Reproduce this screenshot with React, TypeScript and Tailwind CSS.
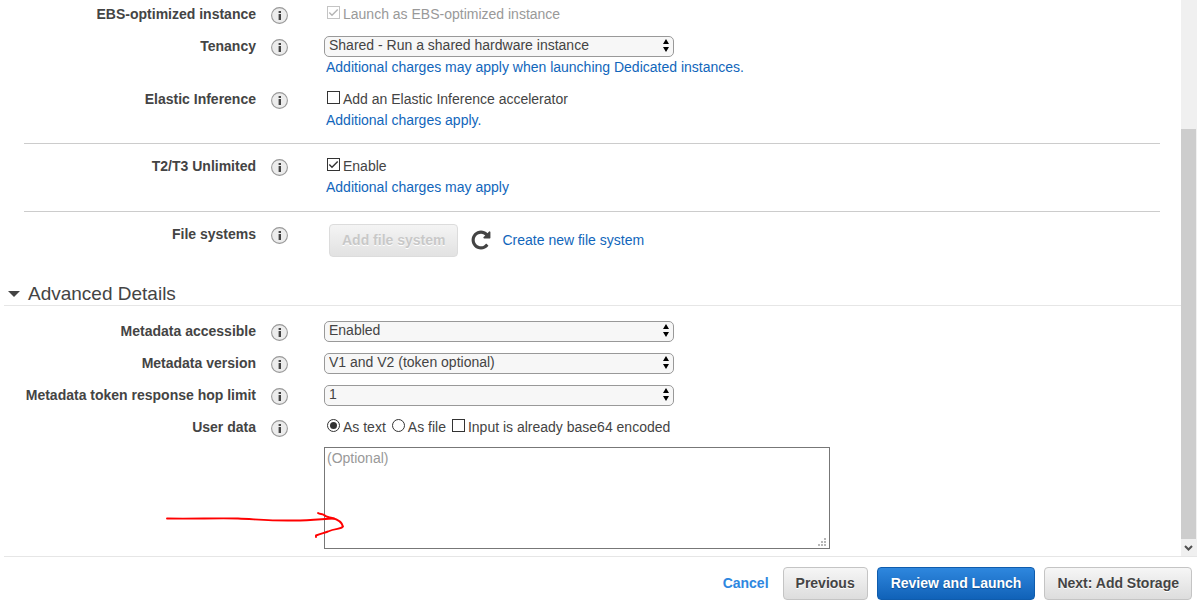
import type { ReactNode } from "react";

function InfoIcon({ topic }: { topic: string }) {
  return (
    <button type="button" aria-label={`About ${topic}`} className="mt-[3px] h-[17px] w-[17px] shrink-0">
      <svg viewBox="0 0 17 17" className="block h-[17px] w-[17px]">
        <circle cx="8.5" cy="8.5" r="7.9" fill="#ececec" stroke="#999" strokeWidth="1.1" />
        <path d="M8 4h2v2H8z M8 7h2v6H8z" fill="#444" />
        <path d="M7 4h1v2H7z M7 7h1v6H7z" fill="#aaa" />
      </svg>
    </button>
  );
}

function Row({ label, htmlFor, children }: { label: string; htmlFor?: string; children: ReactNode }) {
  return (
    <div className="flex items-start">
      <label htmlFor={htmlFor} className="w-64 shrink-0 text-right font-bold">
        {label}
      </label>
      <div className="flex w-[68px] shrink-0 pl-[15px]">
        <InfoIcon topic={label} />
      </div>
      <div className="min-w-0 flex-1">{children}</div>
    </div>
  );
}

function Select({ id, value }: { id: string; value: string }) {
  return (
    <div className="relative w-full max-w-[350px]">
      <select
        id={id}
        defaultValue={value}
        className="block h-[21px] w-full appearance-none rounded-[5px] border border-[#999] bg-[#f7f7f7] pr-5 pb-0.5 pl-1 leading-[17px] text-[#444]"
      >
        <option>{value}</option>
      </select>
      <svg viewBox="0 0 6 13" className="pointer-events-none absolute top-[3px] right-[5px] h-[13px] w-[6px]">
        <path d="M3 0L6 5H0z M0 8H6L3 13z" fill="#000" />
      </svg>
    </div>
  );
}

function Check({ label, checked = false, disabled = false }: { label: string; checked?: boolean; disabled?: boolean }) {
  return (
    <label className={disabled ? "inline-flex text-[#999]" : "inline-flex"}>
      <span className="relative mt-0.5 mr-[3px] h-[13px] w-[13px]">
        <input
          type="checkbox"
          defaultChecked={checked}
          disabled={disabled}
          className="peer block h-[13px] w-[13px] appearance-none border border-[#333] bg-white disabled:border-[#c4c4c4]"
        />
        <svg
          viewBox="0 0 13 13"
          className="pointer-events-none absolute inset-0 hidden h-[13px] w-[13px] text-[#333] peer-checked:block peer-disabled:text-[#b4b4b4]"
        >
          <path d="M2.300 6.500L5 9.200L10.700 3.500" fill="none" stroke="currentColor" strokeWidth="1.400" />
        </svg>
      </span>
      {label}
    </label>
  );
}

function Radio({ label, checked = false }: { label: string; checked?: boolean }) {
  return (
    <label className="inline-flex">
      <span className="relative mt-0.5 mr-[3px] h-[13px] w-[13px]">
        <input
          type="radio"
          name="user-data-mode"
          defaultChecked={checked}
          className="peer block h-[13px] w-[13px] appearance-none rounded-full border border-[#333] bg-white"
        />
        <span className="pointer-events-none absolute inset-[3px] hidden rounded-full bg-[#333] peer-checked:block" />
      </span>
      {label}
    </label>
  );
}

function TextLink({ children }: { children: ReactNode }) {
  return (
    <a href="#" className="text-[#1166bb] hover:underline">
      {children}
    </a>
  );
}

const button = "h-[33px] rounded-[4px] border font-bold";
const grayButton = "border-[#c4c4c4] bg-linear-to-b from-[#f6f6f6] to-[#dddddd] text-[#444] [text-shadow:0_1px_0_#fff]";

export default function App() {
  return (
    <div className="flex min-h-screen flex-col bg-white font-['Liberation_Sans',Arial,sans-serif] text-[14px] leading-[21px] text-[#444]">
      <main className="mr-px ml-1 flex border-b border-[#e6e6e6]">
        <div className="-ml-1 min-w-0 flex-1 pt-1 pb-[7px]">
          <div className="flex flex-col gap-[11px]">
            <Row label="EBS-optimized instance">
              <div className="pl-[3px]">
                <Check label="Launch as EBS-optimized instance" checked disabled />
              </div>
            </Row>
            <Row label="Tenancy" htmlFor="tenancy">
              <Select id="tenancy" value="Shared - Run a shared hardware instance" />
              <div className="pl-0.5">
                <TextLink>Additional charges may apply when launching Dedicated instances.</TextLink>
              </div>
            </Row>
            <Row label="Elastic Inference">
              <div className="pl-[3px]">
                <Check label="Add an Elastic Inference accelerator" />
              </div>
              <div className="pl-0.5">
                <TextLink>Additional charges apply.</TextLink>
              </div>
            </Row>
          </div>
          <hr className="mt-3 mr-[21px] mb-3 ml-6 border-[#ccc]" />
          <Row label="T2/T3 Unlimited">
            <div className="pl-[3px]">
              <Check label="Enable" checked />
            </div>
            <div className="pl-0.5">
              <TextLink>Additional charges may apply</TextLink>
            </div>
          </Row>
          <hr className="mt-[13px] mr-[21px] mb-3 ml-6 border-[#ccc]" />
          <Row label="File systems">
            <div className="flex items-center pl-[5px]">
              <button
                type="button"
                disabled
                className={`${button} border-[#dcdcdc] bg-linear-to-b from-[#f4f4f4] to-[#e2e2e2] px-3 text-[#c8c8c8] [text-shadow:0_1px_0_#fff]`}
              >
                Add file system
              </button>
              <button type="button" aria-label="Refresh file systems" className="ml-3 pb-0.5">
                <svg viewBox="0 0 1792 1792" className="block h-[22px] w-[22px]" fill="#444">
                  <path d="M1664 256v448q0 26-19 45t-45 19h-448q-42 0-59-40-17-39 14-69l138-138q-148-137-349-137-104 0-198.500 40.500t-163.500 109.500-109.500 163.500-40.500 198.500 40.500 198.500 109.500 163.500 163.500 109.500 198.500 40.500q119 0 225-52t179-147q7-10 23-12 15 0 25 9l137 138q9 8 9.500 20.500t-7.500 22.500q-109 132-264 204.500t-327 72.500q-156 0-298-61t-245-164-164-245-61-298 61-298 164-245 245-164 298-61q147 0 284.500 55.500t244.500 156.500l130-129q29-31 70-14 39 17 39 59z" />
                </svg>
              </button>
              <span className="ml-2.5">
                <TextLink>Create new file system</TextLink>
              </span>
            </div>
          </Row>

          <h2 className="mt-[26px] ml-1 border-b border-[#e6e6e6] text-[19px] leading-[22px]">
            <button type="button" aria-expanded="true" className="flex items-center pl-1">
              <svg viewBox="0 0 12 6" className="mr-2 h-[6px] w-3" fill="#444">
                <path d="M0 0H12L6 6z" />
              </svg>
              Advanced Details
            </button>
          </h2>
          <div className="mt-[15px] flex flex-col gap-[11px]">
            <Row label="Metadata accessible" htmlFor="meta-accessible">
              <Select id="meta-accessible" value="Enabled" />
            </Row>
            <Row label="Metadata version" htmlFor="meta-version">
              <Select id="meta-version" value="V1 and V2 (token optional)" />
            </Row>
            <Row label="Metadata token response hop limit" htmlFor="hop-limit">
              <Select id="hop-limit" value="1" />
            </Row>
            <Row label="User data" htmlFor="user-data">
              <div className="flex gap-1.5 pl-[3px]">
                <Radio label="As text" checked />
                <Radio label="As file" />
                <Check label="Input is already base64 encoded" />
              </div>
              <div className="relative mt-[9px] w-full max-w-[506px]">
                <textarea
                  id="user-data"
                  placeholder="(Optional)"
                  className="block h-[102px] w-full resize-none border border-[#777] bg-white px-0.5 placeholder:text-[#999]"
                />
                <svg
                  viewBox="0 0 8 8"
                  className="pointer-events-none absolute right-1 bottom-[3px] h-2 w-2"
                  fill="#b8b8b8"
                  shapeRendering="crispEdges"
                >
                  <path d="M6 0h2v2H6z M3 3h2v2H3z M6 3h2v2H6z M0 6h2v2H0z M3 6h2v2H3z M6 6h2v2H6z" />
                </svg>
                <svg
                  viewBox="0 0 182 30"
                  className="pointer-events-none absolute bottom-2 -left-40 h-[30px] w-[182px]"
                  fill="none"
                  stroke="#f00"
                  strokeWidth="1.900"
                  strokeLinecap="round"
                  strokeLinejoin="round"
                >
                  <path d="M3 7.500C30 8 50 7 74 7.500C95 8.500 110 10 130 9.500C148 9.500 158 8 170 7.500" />
                  <path d="M154 2C156 3.500 158 2.500 160 4C162 6 164 6 168 7C174 8.500 178 11.500 179 15.500C177 18.500 172 17 164 20.500C160 22 157 22.500 152 24.500L152 26" />
                </svg>
              </div>
            </Row>
          </div>
        </div>
        <div aria-hidden="true" className="flex w-4 shrink-0 flex-col bg-[#f0f0f0] pt-[129px]">
          <div className="w-[15px] flex-1 bg-[#cdcdcd]" />
          <svg viewBox="0 0 15 17" className="h-[17px] w-[15px]">
            <path d="M4 7L7.500 10.500L11 7" fill="none" stroke="#505050" strokeWidth="2" />
          </svg>
        </div>
      </main>

      <footer className="flex items-center justify-end gap-[9px] pt-2.5 pr-1.5 pb-3">
        <a href="#" className="mr-[5px] font-bold text-[#2e87e0]">
          Cancel
        </a>
        <button type="button" className={`${button} ${grayButton} px-3`}>
          Previous
        </button>
        <button
          type="button"
          className={`${button} border-[#0f5cad] bg-linear-to-b from-[#2e87de] to-[#1062b8] px-[13px] text-white [text-shadow:0_1px_1px_#0d4a8c]`}
        >
          Review and Launch
        </button>
        <button type="button" className={`${button} ${grayButton} px-3`}>
          Next: Add Storage
        </button>
      </footer>
    </div>
  );
}
